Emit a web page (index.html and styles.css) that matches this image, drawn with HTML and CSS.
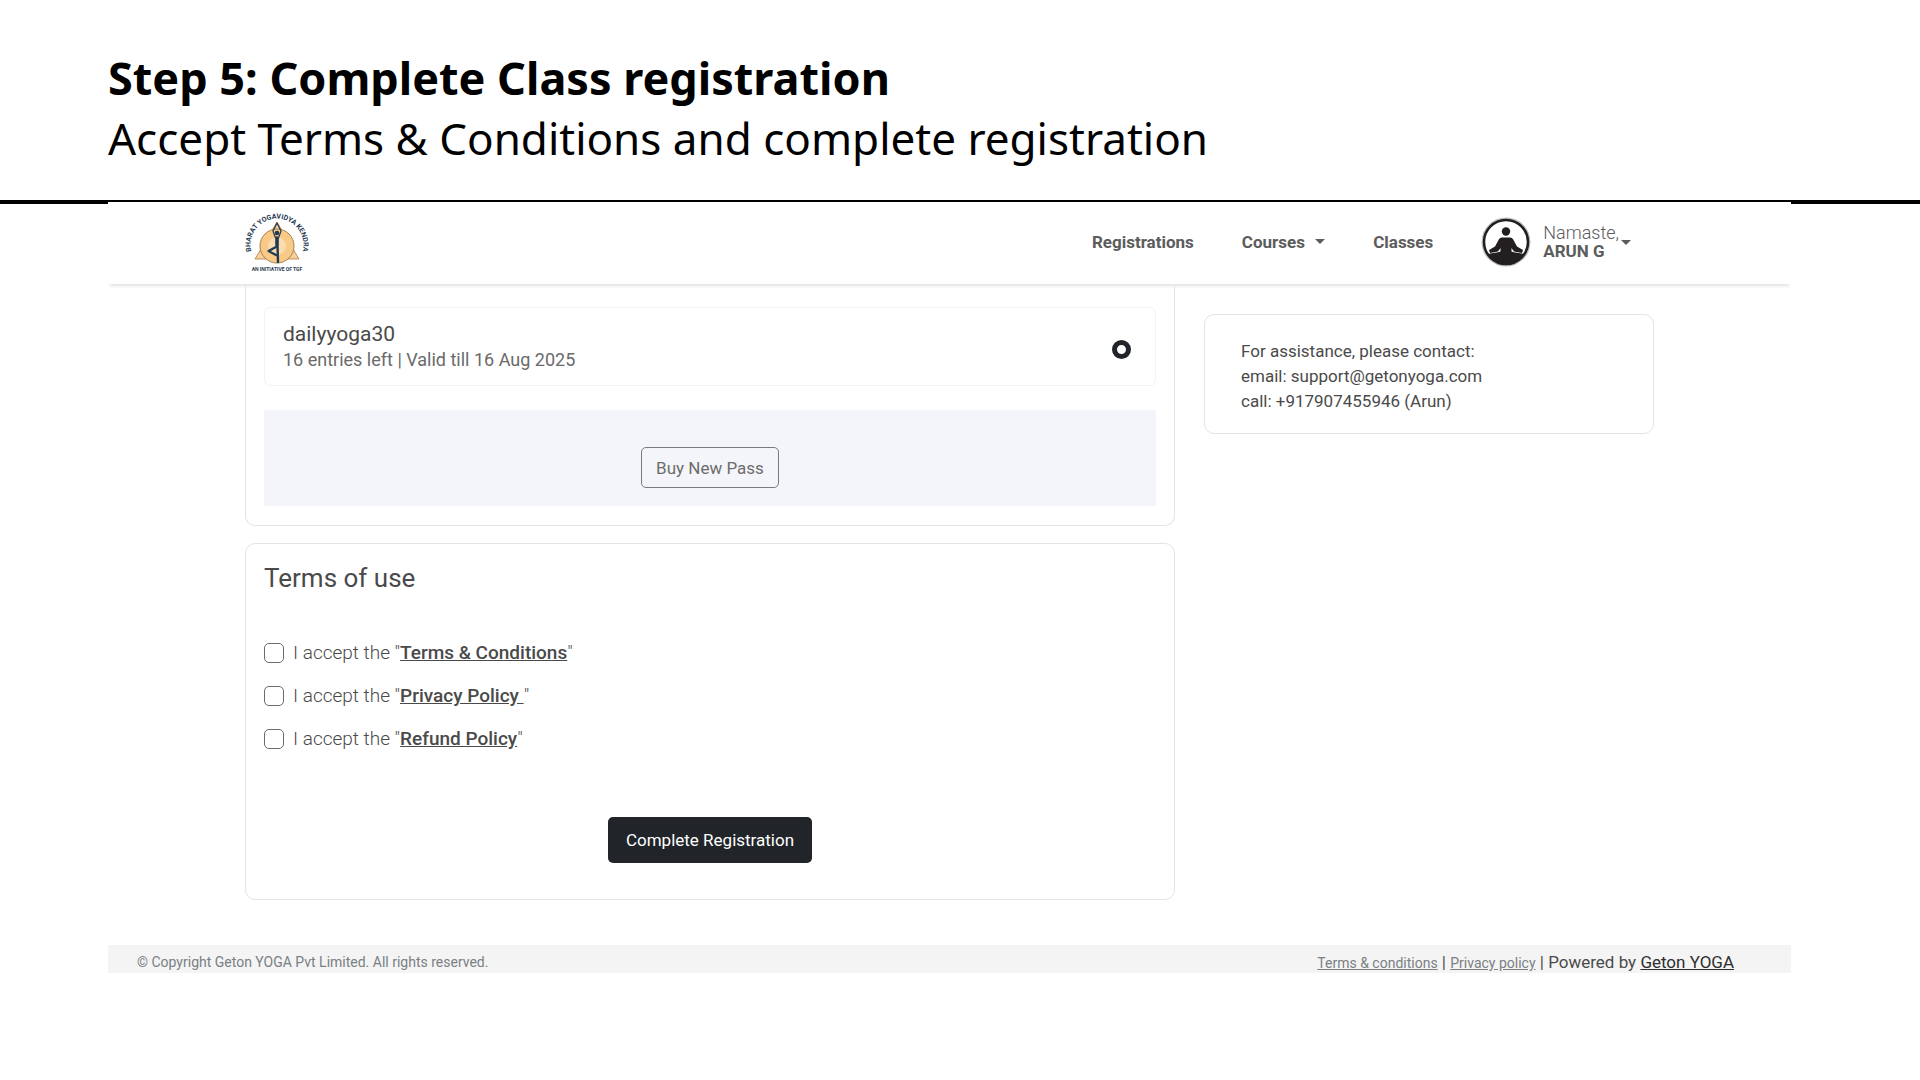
FILE: index.html
```html
<!DOCTYPE html>
<html lang="en">
  <head>
    <meta charset="UTF-8" />
    <meta name="viewport" content="width=device-width, initial-scale=1.0" />
    <title>Complete Class registration</title>
    <link rel="stylesheet" href="styles.css">
  </head>
  <body>
    <header class="step-header">
      <h1>Step 5: Complete Class registration</h1>
      <p>Accept Terms &amp; Conditions and complete registration</p>
    </header>

    <div class="app">
      <!-- Navbar -->
      <nav class="navbar">
        <a class="logo" href="#" aria-label="Bharat Yogavidya Kendra">
          <svg viewBox="0 0 64 62" width="64" height="62">
            <defs>
              <path id="logoArc" d="M7 43 A26.500 26.500 0 1 1 57 43" />
            </defs>
            <path d="M32 11 L54 48 H10 Z" fill="#f3cf9f" stroke="#c98f55" />
            <circle cx="32" cy="35" r="17" fill="#f8c987" stroke="#a9814f" />
            <circle cx="32" cy="35" r="9" fill="#fbdcae" />
            <g fill="none" stroke="#1f3a52" stroke-linecap="round" stroke-linejoin="round">
              <path d="M30.500 27 L28 20 L32 12 L36 20 L33.500 27" stroke-width="1.200" />
              <path d="M32 27 V34" stroke-width="3.600" />
              <path d="M32.500 35 L33 51" stroke-width="2.400" />
              <path d="M31 36 L23.500 40 L31 44" stroke-width="2.200" />
            </g>
            <circle cx="32" cy="22" r="2.300" fill="#1f3a52" />
            <text class="logo-arc"><textPath href="#logoArc" startOffset="50%" text-anchor="middle">BHARAT YOGAVIDYA KENDRA</textPath></text>
            <text class="logo-tag" x="32" y="60" text-anchor="middle">AN INITIATIVE OF TGF</text>
          </svg>
        </a>
        <div class="nav-links">
          <a href="#">Registrations</a>
          <a href="#">Courses <span class="caret"></span></a>
          <a href="#">Classes</a>
          <button class="user-menu" type="button">
            <svg class="avatar" viewBox="0 0 50 50" width="50" height="50">
              <defs>
                <clipPath id="avatarClip"><circle cx="25" cy="25" r="22" /></clipPath>
              </defs>
              <circle cx="25" cy="25" r="24.500" fill="#bdbdbd" />
              <circle cx="25" cy="25" r="22" fill="#fff" stroke="#231f20" stroke-width="2.500" />
              <g clip-path="url(#avatarClip)" fill="#231f20">
                <circle cx="25" cy="14.500" r="4.200" />
                <path d="M21 20.500 H29 C31 20.500 32 22 33 24 L36 29.500 L42 33 L41 36 L33 34.500 L30.500 31 V34.500 C33 35.500 38 36 43 37 L48 36 V50 H2 V36 L7 37 C12 36 17 35.500 19.500 34.500 V31 L17 34.500 L9 36 L8 33 L14 29.500 L17 24 C18 22 19 20.500 21 20.500 Z" />
              </g>
            </svg>
            <span class="user-name">Namaste,<b>ARUN G</b></span>
            <span class="caret"></span>
          </button>
        </div>
      </nav>

      <main class="content">
        <div class="main-col">
          <!-- Pass selection -->
          <section class="card pass-card">
            <div class="pass-item">
              <label for="pass">
                <span class="pass-title">dailyyoga30</span>
                <span class="pass-info">16 entries left | Valid till 16 Aug 2025</span>
              </label>
              <input type="radio" id="pass" name="pass" checked>
            </div>
            <div class="buy-pass">
              <button class="btn btn-outline" type="button">Buy New Pass</button>
            </div>
          </section>

          <!-- Terms -->
          <section class="card terms-card">
            <h2>Terms of use</h2>
            <div class="check-row">
              <input type="checkbox" id="terms">
              <label for="terms">I accept the "<a href="#">Terms &amp; Conditions</a>"</label>
            </div>
            <div class="check-row">
              <input type="checkbox" id="privacy">
              <label for="privacy">I accept the "<a href="#">Privacy Policy </a>"</label>
            </div>
            <div class="check-row">
              <input type="checkbox" id="refund">
              <label for="refund">I accept the "<a href="#">Refund Policy</a>"</label>
            </div>
            <button class="btn btn-dark" type="submit">Complete Registration</button>
          </section>
        </div>

        <aside class="card contact-card">
          <p>For assistance, please contact:</p>
          <p>email: support@getonyoga.com</p>
          <p>call: +917907455946 (Arun)</p>
        </aside>
      </main>

      <footer class="footer">
        <small>© Copyright Geton YOGA Pvt Limited. All rights reserved.</small>
        <div class="footer-links">
          <a class="muted" href="#">Terms &amp; conditions</a> | <a class="muted" href="#">Privacy policy</a> | Powered by <a href="#">Geton YOGA</a>
        </div>
      </footer>
    </div>
  </body>
</html>
```

FILE: styles.css
```css
* {
  box-sizing: border-box;
  margin: 0;
  padding: 0;
}

body {
  background: #fff;
  color: #4a4a4a;
  font-family: Roboto, sans-serif;
  font-size: 17px;
}

button,
input {
  font-family: inherit;
}

.step-header {
  padding: 47px 108px 31px;
  border-bottom: 4px solid #000;
  color: #000;
  font-family: "Noto Sans", sans-serif;
  font-size: 44px;
  line-height: 61px;
}

.step-header h1 {
  font-size: 45px;
  font-weight: 700;
}

/* covers the lower edge of the header rule */
.app {
  position: relative;
  margin: -2px 129px 0 108px;
  background: #fff;
}

/* Navbar */
.navbar {
  display: flex;
  align-items: center;
  justify-content: space-between;
  height: 82px;
  padding: 0 160px 2px 137px;
  box-shadow: 0 4px 3px -2px rgba(0, 0, 0, 0.12);
}

.logo,
.logo svg {
  display: block;
}

.logo-arc {
  fill: #1f3a52;
  font-size: 7px;
  font-weight: 700;
}

.logo-tag {
  fill: #1f3a52;
  font-size: 5px;
  font-weight: 700;
}

.nav-links {
  display: flex;
  align-items: center;
  gap: 48px;
}

.nav-links > a {
  color: #5c5c5c;
  font-weight: 700;
  text-decoration: none;
}

.caret {
  display: inline-block;
  margin-left: 6px;
  border-top: 5px solid #5c5c5c;
  border-right: 5px solid transparent;
  border-left: 5px solid transparent;
  vertical-align: 4px;
}

.user-menu {
  display: flex;
  align-items: center;
  border: none;
  background: none;
  color: #5c5c5c;
  cursor: pointer;
  font-size: 18px;
  font-weight: 300;
  line-height: 18px;
  text-align: left;
}

.user-menu .caret {
  margin-left: 2px;
}

.user-name {
  margin-left: 12px;
}

.user-name b {
  display: block;
  font-size: 17px;
  font-weight: 700;
}

/* Content */
.content {
  display: flex;
  align-items: flex-start;
  gap: 29px;
  padding: 0 137px 45px;
}

.main-col {
  flex: 1;
}

.card {
  border: 1px solid #e4e4e4;
  border-radius: 10px;
}

.pass-card {
  margin-bottom: 17px;
  padding: 23px 18px 19px;
  border-top: none;
  border-radius: 0 0 10px 10px;
}

.pass-item {
  display: flex;
  align-items: center;
  justify-content: space-between;
  height: 79px;
  padding: 0 24px 0 18px;
  border: 1px solid #f3f3f3;
  border-radius: 6px;
}

.pass-item span {
  display: block;
}

.pass-title {
  font-size: 21px;
  line-height: 26px;
}

.pass-info {
  color: #6a6a6a;
  font-size: 18px;
  line-height: 26px;
}

.pass-item input {
  appearance: none;
  width: 19px;
  height: 19px;
  margin-top: 6px;
  border: 5px solid #212529;
  border-radius: 50%;
}

.buy-pass {
  margin-top: 24px;
  padding: 37px 0 18px;
  background: #f4f5fa;
  text-align: center;
}

.btn {
  border-radius: 5px;
  cursor: pointer;
  font-size: 17px;
}

.btn-outline {
  display: block;
  height: 41px;
  margin: 0 auto;
  padding: 0 14px;
  border: 1px solid #7a7a7a;
  background: none;
  color: #6c6c6c;
}

.btn-dark {
  display: block;
  height: 46px;
  margin: 57px auto 0;
  padding: 0 18px;
  border: none;
  background: #212529;
  color: #fff;
}

.terms-card {
  padding: 16px 18px 36px;
}

.terms-card h2 {
  margin-bottom: 35px;
  font-size: 26px;
  font-weight: 400;
  line-height: 36px;
}

.check-row {
  display: flex;
  align-items: center;
  height: 43px;
  font-size: 19px;
  font-weight: 300;
}

.check-row input {
  appearance: none;
  width: 20px;
  height: 20px;
  margin-right: 9px;
  border: 1px solid #6c6c6c;
  border-radius: 5px;
}

.check-row a {
  color: #4a4a4a;
  font-weight: 500;
  white-space: pre;
}

.contact-card {
  width: 450px;
  margin-top: 30px;
  padding: 24px 36px 19px;
  font-size: 17px;
  line-height: 25px;
}

/* Footer */
.footer {
  display: flex;
  align-items: center;
  justify-content: space-between;
  height: 28px;
  padding: 6px 57px 0 29px;
  background: #f4f4f4;
}

.footer small,
.footer .muted {
  color: #7a8083;
  font-size: 14px;
}

.footer a {
  color: #2e2e2e;
}
```
